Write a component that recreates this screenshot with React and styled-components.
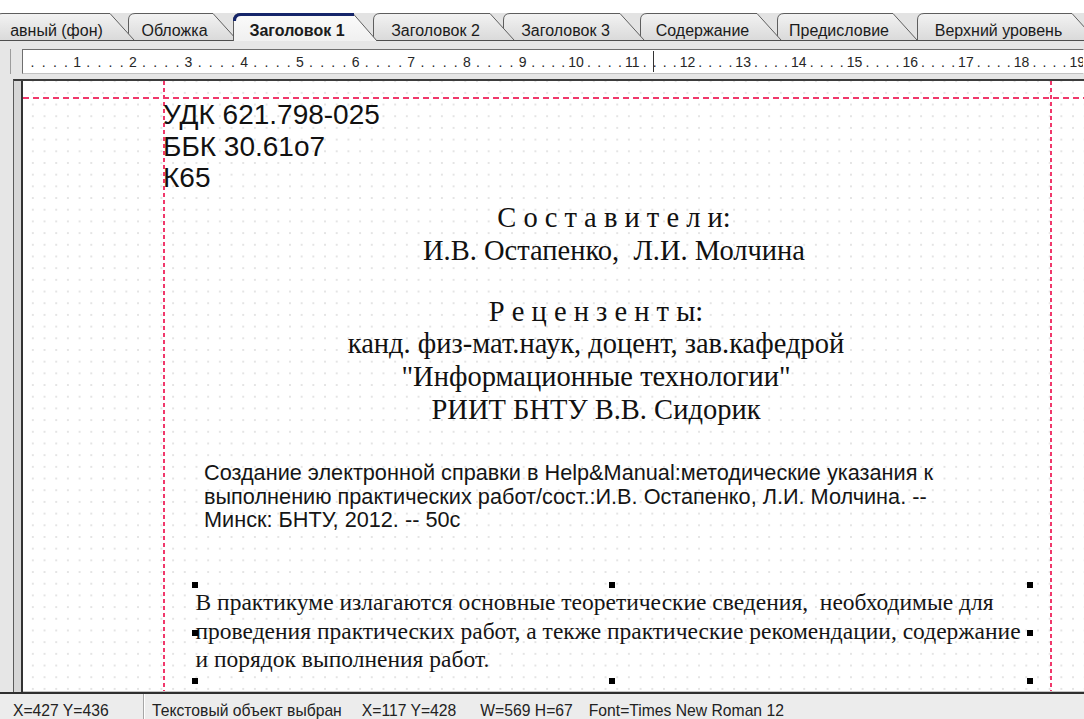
import React from "react";
import styled, { createGlobalStyle } from "styled-components";

const GlobalStyle = createGlobalStyle`
  html, body { margin: 0; padding: 0; background: #fff; }
  body { font-family: "Liberation Sans", Arial, sans-serif; }
  #root { width: 1084px; height: 719px; overflow: hidden; }
`;

const CHROME = "#e6e6e6";
const SANS = `"Liberation Sans", Arial, sans-serif`;
const SERIF = `"Liberation Serif", "Times New Roman", serif`;

const Window = styled.div`
  width: 1084px;
  height: 719px;
  display: flex;
  flex-direction: column;
  overflow: hidden;
  background: ${CHROME};
`;

/* ---------- page tabs ---------- */

const TabStrip = styled.div`
  flex: none;
  height: 40px;
  display: flex;
  align-items: flex-end;
  background: linear-gradient(#fff 0 13px, #e3e3e3 13px);
  border-bottom: 1px solid #4e4e4e;
`;

const TabRow = styled.div`
  display: flex;
  align-items: flex-end;
  margin-left: -5px;
`;

const TabItem = styled.div`
  position: relative;
  flex: none;
  width: ${(p) => p.$w}px;
  height: ${(p) => (p.$active ? 28 : 27)}px;
  margin-bottom: ${(p) => (p.$active ? -1 : 0)}px;
  z-index: ${(p) => p.$z};
`;

const TabShape = styled.svg`
  position: absolute;
  left: 0;
  top: 0;
  overflow: visible;
  display: block;
`;

const TabLabel = styled.span`
  position: relative;
  display: block;
  width: ${(p) => p.$span}px;
  padding-top: 9px;
  text-align: center;
  font: ${(p) => (p.$active ? 700 : 400)} 16px/18px ${SANS};
  color: #1b1b1b;
  white-space: nowrap;
`;

const SLANT = 24;

function Tab({ label, start, end, next, active, z }) {
  const bodyW = end - start;
  const h = active ? 28 : 27;
  const fill = `M0,${h} L0,7 Q0,0 7,0 L${bodyW},0 L${bodyW + SLANT},${h} Z`;
  const edge = `M0.5,${h} L0.5,7 Q0.5,0.5 7,0.5 L${bodyW},0.5 L${bodyW + SLANT},${h}`;
  const gid = `tabfill-${start}`;
  return (
    <TabItem $w={next - start} $active={active} $z={z}>
      <TabShape width={bodyW + SLANT} height={h}>
        <defs>
          <linearGradient id={gid} x1="0" y1="0" x2="0" y2="1">
            <stop offset="0" stopColor={active ? "#fbfbfb" : "#f3f3f3"} />
            <stop offset="1" stopColor={active ? "#f0f0f0" : "#dadada"} />
          </linearGradient>
        </defs>
        <path d={fill} fill={`url(#${gid})`} />
        <path d={edge} fill="none" stroke="#5e5e5e" strokeWidth="1" />
        {active && (
          <path
            d={`M1.5,8 Q1.5,1.5 8,1.5 L${bodyW + 1},1.5`}
            fill="none"
            stroke="#15256a"
            strokeWidth="3"
          />
        )}
      </TabShape>
      <TabLabel $span={bodyW + 8} $active={active}>
        {label}
      </TabLabel>
    </TabItem>
  );
}

const tabs = [
  { label: "авный (фон)", start: -5, end: 110, next: 128 },
  { label: "Обложка", start: 128, end: 213, next: 233 },
  { label: "Заголовок 1", start: 233, end: 353, next: 373, active: true },
  { label: "Заголовок 2", start: 373, end: 490, next: 503 },
  { label: "Заголовок 3", start: 503, end: 620, next: 640 },
  { label: "Содержание", start: 640, end: 757, next: 777 },
  { label: "Предисловие", start: 777, end: 893, next: 917 },
  { label: "Верхний уровень", start: 917, end: 1072, next: 1100 },
];

/* ---------- horizontal ruler ---------- */

const RulerBar = styled.div`
  flex: none;
  height: 38px;
  box-sizing: border-box;
  padding: 8px 0 5px 10px;
  display: flex;
`;

const RulerWell = styled.div`
  flex: 1;
  display: flex;
  padding-left: 11px;
  border-left: 1px solid #9c9c9c;
  min-width: 0;
`;

const RulerBox = styled.div`
  position: relative;
  flex: 1;
  box-sizing: border-box;
  height: 25px;
  display: flex;
  align-items: center;
  padding-left: 4px;
  overflow: hidden;
  background: #fff;
  border: 1px solid;
  border-color: #6e6e6e #fff #c2c2c2 #6e6e6e;
  font: 14px/16px ${SANS};
  color: #262626;
`;

const RulerUnit = styled.div`
  flex: none;
  width: 55.7px;
  display: grid;
  grid-template-columns: repeat(5, 1fr);
  text-align: center;
  white-space: nowrap;
`;

const RulerTick = styled.span`
  display: flex;
  justify-content: center;
`;

const RulerCursor = styled.span`
  position: absolute;
  left: 630px;
  top: 1px;
  bottom: 1px;
  width: 1px;
  background: #333;
`;

/* ---------- editor ---------- */

const Editor = styled.div`
  flex: 1;
  min-height: 0;
  display: flex;
  padding-left: 13px;
`;

const EditorFrame = styled.div`
  flex: 1;
  min-width: 0;
  display: flex;
  border-top: 2px solid #3c3c3c;
  border-left: 1px solid #5a5a5a;
`;

const SideRuler = styled.div`
  flex: none;
  width: 7px;
  background: #d6d6d6;
  border-right: 2px solid #333;
`;

const Page = styled.div`
  position: relative;
  flex: 1;
  overflow: hidden;
  background-color: #fff;
  background-image: radial-gradient(circle, #e4e4e4 0.7px, transparent 1.1px);
  background-size: 11.7px 11.7px;
  background-position: 4px 6px;
  border-bottom: 1px solid #c4c4c4;
`;

const HGuide = styled.div`
  position: absolute;
  left: 0;
  right: 0;
  top: ${(p) => p.$y}px;
  height: 2px;
  background: repeating-linear-gradient(90deg, #f0386b 0 6px, transparent 6px 10px);
`;

const VGuide = styled.div`
  position: absolute;
  top: 0;
  bottom: 0;
  left: ${(p) => p.$x}px;
  width: 2px;
  background: repeating-linear-gradient(180deg, #f0386b 0 4px, transparent 4px 7px);
`;

const IndexBlock = styled.div`
  position: absolute;
  left: ${(p) => p.$x}px;
  top: ${(p) => p.$y}px;
  font: 28px/31.5px ${SANS};
  color: #111;
  white-space: pre;
`;

const CreditsBlock = styled.div`
  position: absolute;
  left: ${(p) => p.$cx - 350}px;
  top: ${(p) => p.$y}px;
  width: 700px;
  text-align: center;
  font: 28.5px/${(p) => p.$lh}px ${SERIF};
  color: #111;
  white-space: pre;
`;

const AbstractBlock = styled.div`
  position: absolute;
  left: ${(p) => p.$x}px;
  top: ${(p) => p.$y}px;
  font: 21.7px/23.5px ${SANS};
  color: #151515;
  white-space: pre;
`;

const SelectedBox = styled.div`
  position: absolute;
  left: ${(p) => p.$x}px;
  top: ${(p) => p.$y}px;
  width: ${(p) => p.$w}px;
  height: ${(p) => p.$h}px;
`;

const SelectedText = styled.div`
  padding: 3px 0 0 1px;
  font: 23.5px/28.5px ${SERIF};
  color: #151515;
  white-space: pre;
`;

const Handle = styled.span`
  position: absolute;
  left: ${(p) => p.$px}%;
  top: ${(p) => p.$py}%;
  width: 6px;
  height: 6px;
  margin: -3px 0 0 -3px;
  background: #000;
`;

const handlePoints = [
  [0, 0], [50, 0], [100, 0],
  [0, 50], [100, 50],
  [0, 100], [50, 100], [100, 100],
];

/* ---------- status bar ---------- */

const StatusBar = styled.div`
  flex: none;
  height: 27px;
  box-sizing: border-box;
  display: flex;
  border-top: 2px solid #2f2f2f;
  background: #ececec;
  font: 15.7px/15px ${SANS};
  color: #222;
  white-space: nowrap;
`;

const StatusCell = styled.div`
  flex: ${(p) => (p.$grow ? 1 : "none")};
  width: ${(p) => (p.$grow ? "auto" : `${p.$w}px`)};
  box-sizing: border-box;
  display: flex;
  padding: 9px 0 0 ${(p) => p.$pad}px;
  border-right: ${(p) => (p.$grow ? "none" : "1px solid #a6a6a6")};
  box-shadow: ${(p) => (p.$grow ? "none" : "1px 0 0 #fff")};
`;

const StatusItem = styled.span`
  margin-left: ${(p) => p.$gap || 0}px;
`;

export default function App() {
  const units = Array.from({ length: 20 }, (_, i) => i + 1);
  return (
    <>
      <GlobalStyle />
      <Window>
        <TabStrip>
          <TabRow>
            {tabs.map((t, i) => (
              <Tab key={t.label} {...t} z={t.active ? 50 : 20 - i} />
            ))}
          </TabRow>
        </TabStrip>

        <RulerBar>
          <RulerWell>
            <RulerBox>
              {units.map((n) => (
                <RulerUnit key={n}>
                  <RulerTick>.</RulerTick>
                  <RulerTick>.</RulerTick>
                  <RulerTick>.</RulerTick>
                  <RulerTick>.</RulerTick>
                  <RulerTick>{n}</RulerTick>
                </RulerUnit>
              ))}
              <RulerCursor />
            </RulerBox>
          </RulerWell>
        </RulerBar>

        <Editor>
          <EditorFrame>
            <SideRuler />
            <Page>
              <HGuide $y={16} />
              <VGuide $x={140} />
              <VGuide $x={1027} />

              <IndexBlock $x={140} $y={18}>
                {"УДК 621.798-025\nББК 30.61о7\nК65"}
              </IndexBlock>

              <CreditsBlock $cx={591} $y={119.5} $lh={33}>
                {"С о с т а в и т е л и:\nИ.В. Остапенко,  Л.И. Молчина"}
              </CreditsBlock>

              <CreditsBlock $cx={573} $y={214.6} $lh={32.7}>
                {"Р е ц е н з е н т ы:\nканд. физ-мат.наук, доцент, зав.кафедрой\n\"Информационные технологии\"\nРИИТ БНТУ В.В. Сидорик"}
              </CreditsBlock>

              <AbstractBlock $x={181} $y={380}>
                {"Создание электронной справки в Help&Manual:методические указания к\nвыполнению практических работ/сост.:И.В. Остапенко, Л.И. Молчина. --\nМинск: БНТУ, 2012. -- 50с"}
              </AbstractBlock>

              <SelectedBox $x={171.5} $y={504} $w={835.5} $h={96}>
                <SelectedText>
                  {"В практикуме излагаются основные теоретические сведения,  необходимые для\nпроведения практических работ, а текже практические рекомендации, содержание\nи порядок выполнения работ."}
                </SelectedText>
                {handlePoints.map(([px, py]) => (
                  <Handle key={`${px}-${py}`} $px={px} $py={py} />
                ))}
              </SelectedBox>
            </Page>
          </EditorFrame>
        </Editor>

        <StatusBar>
          <StatusCell $w={144} $pad={13}>
            <StatusItem>X=427 Y=436</StatusItem>
          </StatusCell>
          <StatusCell $grow $pad={8}>
            <StatusItem>Текстовый объект выбран</StatusItem>
            <StatusItem $gap={20}>X=117 Y=428</StatusItem>
            <StatusItem $gap={24}>W=569 H=67</StatusItem>
            <StatusItem $gap={16}>Font=Times New Roman 12</StatusItem>
          </StatusCell>
        </StatusBar>
      </Window>
    </>
  );
}
